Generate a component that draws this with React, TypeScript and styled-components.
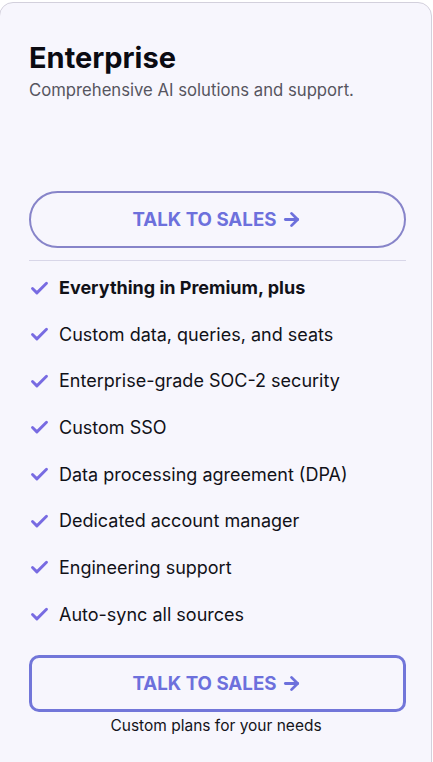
import React from 'react';
import styled, { createGlobalStyle } from 'styled-components';
import { Check, ArrowRight } from 'lucide-react';

const features = [
  'Everything in Premium, plus',
  'Custom data, queries, and seats',
  'Enterprise-grade SOC-2 security',
  'Custom SSO',
  'Data processing agreement (DPA)',
  'Dedicated account manager',
  'Engineering support',
  'Auto-sync all sources',
];

const App: React.FC = () => {
  return (
    <>
      <GlobalStyle />
      <Card>
        <Title>Enterprise</Title>
        <Subtitle>Comprehensive AI solutions and support.</Subtitle>
        <SalesButton $variant="pill">
          TALK TO SALES
          <ArrowRight size={21} strokeWidth={3.2} />
        </SalesButton>
        <Divider />
        <FeatureList>
          {features.map((f, i) => (
            <FeatureRow key={f}>
              <Check size={21} strokeWidth={3.3} color="#786be2" />
              <FeatureText $bold={i === 0}>{f}</FeatureText>
            </FeatureRow>
          ))}
        </FeatureList>
        <SalesButton $variant="box">
          TALK TO SALES
          <ArrowRight size={21} strokeWidth={3.2} />
        </SalesButton>
        <FootNote>Custom plans for your needs</FootNote>
      </Card>
    </>
  );
};

export default App;

const GlobalStyle = createGlobalStyle`
  body {
    margin: 0;
    background: #ffffff;
    font-family: Inter, 'Noto Sans', sans-serif;
    overflow: hidden;
  }
`;

const Card = styled.div`
  box-sizing: border-box;
  display: flex;
  flex-direction: column;
  width: 433px;
  min-height: 800px;
  margin: 2px 0 0 -1px;
  padding: 39px 28px 0 29px;
  background-color: #f7f6fd;
  border: 1px solid #d3d0dc;
  border-radius: 14px;
`;

const Title = styled.h1`
  margin: 0;
  font-size: 29px;
  line-height: 32px;
  font-weight: 700;
  color: #0b0b12;
`;

const Subtitle = styled.p`
  margin: 6px 0 0 0;
  font-size: 16.7px;
  line-height: 20px;
  color: #56555f;
`;

const SalesButton = styled.button<{ $variant: 'pill' | 'box' }>`
  box-sizing: border-box;
  display: flex;
  align-items: center;
  justify-content: center;
  gap: 5px;
  width: 377px;
  height: 57px;
  margin-top: ${(p) => (p.$variant === 'pill' ? '91px' : '27px')};
  border-radius: ${(p) => (p.$variant === 'pill' ? '29px' : '10px')};
  border: ${(p) => (p.$variant === 'pill' ? '2px solid #8784c9' : '3px solid #7276d9')};
  background: transparent;
  color: #6d70dc;
  font-family: Inter, 'Noto Sans', sans-serif;
  font-size: 18.7px;
  font-weight: 700;
  padding: 0;
`;

const Divider = styled.hr`
  width: 377px;
  height: 1px;
  margin: 12px 0 0 0;
  border: 0;
  background-color: #d8d6e8;
`;

const FeatureList = styled.ul`
  list-style: none;
  margin: 14px 0 0 0;
  padding: 0;
  display: flex;
  flex-direction: column;
  gap: 20.67px;
`;

const FeatureRow = styled.li`
  display: flex;
  align-items: center;
  gap: 9px;
  height: 26px;
`;

const FeatureText = styled.span<{ $bold?: boolean }>`
  font-size: 18px;
  line-height: 26px;
  color: #111118;
  font-weight: ${(p) => (p.$bold ? 700 : 400)};
`;

const FootNote = styled.p`
  margin: 4px 0 0 0;
  text-align: center;
  font-size: 15.5px;
  line-height: 20px;
  color: #14141a;
`;
